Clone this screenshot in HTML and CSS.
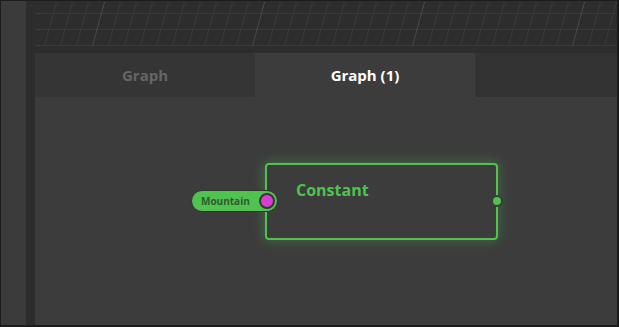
FILE: index.html
```html
<!DOCTYPE html>
<html lang="en">
<head>
    <meta charset="UTF-8">
    <title>Graph</title>
    <link rel="stylesheet" href="styles.css">
</head>
<body>
    <div class="app">
        <div class="sidebar"></div>
        <div class="main">
            <div class="grid">
                <svg width="582" height="52" viewBox="0 0 582 52">
                    <g stroke="#3a3a3a" stroke-width="1">
                        <line x1="0" y1="12.5" x2="582" y2="12.5"/>
                        <line x1="0" y1="28.5" x2="582" y2="28.5"/>
                        <line x1="0" y1="44.5" x2="582" y2="44.5"/>
                    </g>
                    <g id="verticals" stroke-width="1"></g>
                </svg>
            </div>
            <div class="panel">
                <div class="tabs">
                    <div class="tab">Graph</div>
                    <div class="tab active">Graph (1)</div>
                    <div class="tab-rest"></div>
                </div>
                <div class="canvas">
                    <div class="node">
                        <div class="title">Constant</div>
                        <div class="port-in">
                            <span class="port-label">Mountain</span>
                            <span class="port-dot"></span>
                        </div>
                        <span class="port-out"></span>
                    </div>
                </div>
            </div>
        </div>
    </div>

    <script>
        // 网格竖线，斜着画
        var g = document.getElementById('verticals');
        for (var k = 0; k < 38; k++) {
            var x = 9 + k * 16;
            var line = document.createElementNS('http://www.w3.org/2000/svg', 'line');
            line.setAttribute('x1', x + 12.5);
            line.setAttribute('y1', 1);
            line.setAttribute('x2', x + 0.5);
            line.setAttribute('y2', 45);
            line.setAttribute('stroke', k % 10 == 3 ? '#4a4a4a' : '#3b3b3b');
            g.appendChild(line);
        }
    </script>
</body>
</html>
```

FILE: styles.css
```css
* {
    margin: 0;
    padding: 0;
    box-sizing: border-box;
}
body {
    background-color: #1c1c1c;
    font-family: "Open Sans", "Liberation Sans", sans-serif;
}
.app {
    display: flex;
    width: 619px;
    height: 327px;
    border: 1px solid #1c1c1c;
    border-right-width: 2px;
    border-bottom-width: 2px;
}
.sidebar {
    width: 25px;
    background-color: #3b3b3b;
}
.main {
    flex: 1;
    display: flex;
    flex-direction: column;
    padding-left: 9px;
    background-color: #2d2d2d;
}
.grid {
    height: 52px;
    overflow: hidden;
}
.grid svg {
    display: block;
}
.panel {
    flex: 1;
    display: flex;
    flex-direction: column;
}


.tabs {
    display: flex;
    height: 44px;
}
.tab {
    width: 220px;
    line-height: 44px;
    text-align: center;
    font-size: 15px;
    font-weight: 700;
    color: #666;
    background-color: #353535;
}
.tab.active {
    color: #fff;
    background-color: #3c3c3c;
}
.tab-rest {
    flex: 1;
    background-color: #333;
}
.canvas {
    position: relative;
    flex: 1;
    background-color: #3c3c3c;
}


.node {
    position: absolute;
    left: 230px;
    top: 66px;
    width: 233px;
    height: 77px;
    border: 2px solid #4fc24f;
    border-radius: 4px;
    box-shadow: 0 0 12px 2px rgba(79, 194, 79, 0.3);
}
.title {
    padding: 14px 0 0 29px;
    font-size: 16px;
    font-weight: 700;
    color: #4fc24f;
}
.port-in {
    position: absolute;
    left: -76px;
    top: 25px;
    display: flex;
    align-items: center;
    width: 87px;
    height: 22px;
    padding: 0 2px 0 9px;
    border: 1px solid #333;
    border-radius: 11px;
    background-color: #4fc24f;
}
.port-label {
    flex: 1;
    font-size: 10px;
    font-weight: 700;
    color: #2f5a2f;
}
.port-dot {
    width: 16px;
    height: 16px;
    border: 2px solid #363636;
    border-radius: 50%;
    background-color: #d83fd0;
}
.port-out {
    position: absolute;
    right: -7px;
    top: 30px;
    width: 12px;
    height: 12px;
    border: 2px solid #3c3c3c;
    border-radius: 50%;
    background-color: #4fc24f;
}
```
